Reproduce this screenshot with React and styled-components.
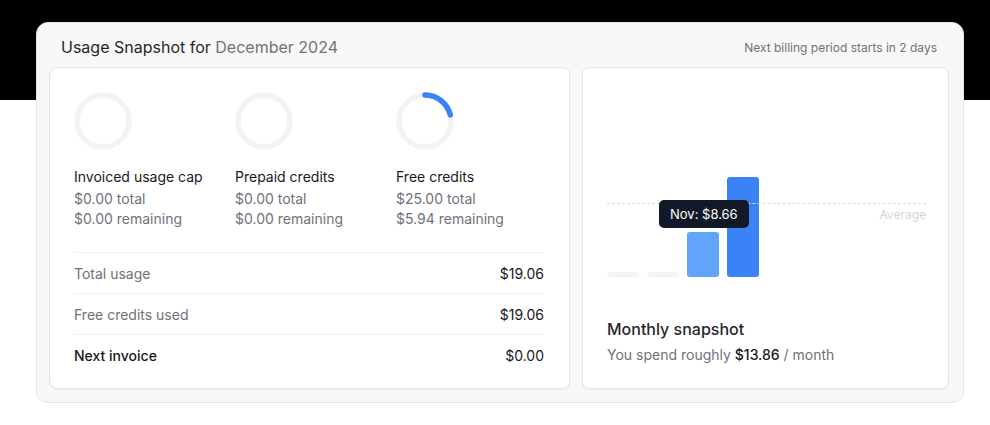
import React from "react";
import styled, { createGlobalStyle } from "styled-components";

const GlobalStyle = createGlobalStyle`
  html, body {
    margin: 0;
    padding: 0;
    background: #ffffff;
    font-family: Inter, "Noto Sans", Arial, sans-serif;
    -webkit-font-smoothing: antialiased;
  }
`;

const Page = styled.div`
  width: 990px;
  height: 425px;
  box-sizing: border-box;
  padding: 22px 26px 0 36px;
  background: linear-gradient(#000 0, #000 100px, #fff 100px, #fff 100%);
`;

const Shell = styled.div`
  box-sizing: border-box;
  width: 928px;
  background: #f8f8f8;
  border: 1px solid #e6e6e6;
  border-radius: 12px;
  padding: 0 14px 13px 12px;
`;

const Header = styled.div`
  box-sizing: border-box;
  height: 44px;
  display: flex;
  align-items: center;
  justify-content: space-between;
  padding: 4px 12px 0;
`;

const Title = styled.h2`
  margin: 0;
  font-size: 16px;
  font-weight: 400;
  color: #27272a;
`;

const Muted = styled.span`
  color: #71717a;
`;

const Hint = styled.span`
  font-size: 12px;
  color: #71717a;
`;

const Grid = styled.div`
  display: grid;
  grid-template-columns: 521px 1fr;
  gap: 12px;
`;

const Card = styled.div`
  box-sizing: border-box;
  height: 322px;
  background: #ffffff;
  border: 1px solid #e5e5e5;
  border-radius: 8px;
  box-shadow: 0 1px 2px rgba(0, 0, 0, 0.05);
  padding: ${(p) => p.$padding};
  display: flex;
  flex-direction: column;
`;

const Meters = styled.div`
  display: grid;
  grid-template-columns: repeat(3, 161px);
  padding-bottom: 23px;
`;

const Meter = styled.div`
  display: flex;
  flex-direction: column;
`;

const RingSvg = styled.svg`
  display: block;
  margin-bottom: 17px;
`;

const MeterLabel = styled.div`
  font-size: 14px;
  line-height: 20px;
  font-weight: 400;
  color: #18181b;
  margin-bottom: 2px;
`;

const MeterSub = styled.div`
  font-size: 14px;
  line-height: 20px;
  color: #71717a;
`;

const Row = styled.div`
  display: flex;
  justify-content: space-between;
  align-items: center;
  height: 41px;
  border-top: 1px solid #f0f0f0;
  font-size: 14px;
`;

const RowLabel = styled.span`
  color: ${(p) => (p.$strong ? "#18181b" : "#71717a")};
  font-weight: ${(p) => (p.$strong ? 500 : 400)};
`;

const RowValue = styled.span`
  color: #18181b;
  font-weight: 400;
`;

const Chart = styled.div`
  position: relative;
  flex: 1;
  display: flex;
  align-items: flex-end;
  gap: 8px;
  margin-bottom: 41px;
`;

const Bar = styled.div`
  width: 32px;
  border-radius: 3px;
  background: ${(p) => p.$color};
`;

const AvgLine = styled.div`
  position: absolute;
  left: 0;
  right: -2px;
  bottom: 73px;
  border-top: 1px dashed #dcdcdf;
`;

const AvgLabel = styled.span`
  position: absolute;
  right: -2px;
  bottom: 55px;
  font-size: 12px;
  line-height: 14px;
  color: #d4d4d8;
`;

const Tooltip = styled.div`
  position: absolute;
  left: 52px;
  bottom: 49px;
  height: 28px;
  padding: 0 11px;
  display: flex;
  align-items: center;
  background: #111827;
  border-radius: 5px;
  color: #ffffff;
  font-size: 13px;
  font-weight: 400;
`;

const SnapTitle = styled.div`
  font-size: 16px;
  line-height: 22px;
  font-weight: 500;
  color: #27272a;
  margin-bottom: 5px;
`;

const SnapText = styled.div`
  font-size: 14px;
  line-height: 20px;
  color: #71717a;
`;

const Strong = styled.span`
  color: #18181b;
  font-weight: 500;
`;

const Ring = ({ percent }) => {
  const r = 26;
  const c = 2 * Math.PI * r;
  return (
    <RingSvg width="58" height="58" viewBox="0 0 58 58">
      <circle cx="29" cy="29" r={r} fill="none" stroke="#f3f3f3" strokeWidth="5.5" />
      {percent > 0 && (
        <circle
          cx="29"
          cy="29"
          r={r}
          fill="none"
          stroke="#3b82f6"
          strokeWidth="5.5"
          strokeLinecap="round"
          strokeDasharray={`${(c * percent) / 100} ${c}`}
          transform="rotate(-90 29 29)"
        />
      )}
    </RingSvg>
  );
};

const meters = [
  { label: "Invoiced usage cap", total: "$0.00", remaining: "$0.00", percent: 0 },
  { label: "Prepaid credits", total: "$0.00", remaining: "$0.00", percent: 0 },
  { label: "Free credits", total: "$25.00", remaining: "$5.94", percent: 21 },
];

const rows = [
  { label: "Total usage", value: "$19.06" },
  { label: "Free credits used", value: "$19.06" },
  { label: "Next invoice", value: "$0.00", strong: true },
];

const bars = [
  { h: 5, color: "#f3f4f6" },
  { h: 5, color: "#f3f4f6" },
  { h: 45, color: "#60a5fa" },
  { h: 100, color: "#3b82f6" },
];

const App = () => (
  <Page>
    <GlobalStyle />
    <Shell>
      <Header>
        <Title>
          Usage Snapshot for <Muted>December 2024</Muted>
        </Title>
        <Hint>Next billing period starts in 2 days</Hint>
      </Header>
      <Grid>
        <Card $padding="24px 25px 13px 24px">
          <Meters>
            {meters.map((m) => (
              <Meter key={m.label}>
                <Ring percent={m.percent} />
                <MeterLabel>{m.label}</MeterLabel>
                <MeterSub>{m.total} total</MeterSub>
                <MeterSub>{m.remaining} remaining</MeterSub>
              </Meter>
            ))}
          </Meters>
          {rows.map((r) => (
            <Row key={r.label}>
              <RowLabel $strong={r.strong}>{r.label}</RowLabel>
              <RowValue>{r.value}</RowValue>
            </Row>
          ))}
        </Card>
        <Card $padding="24px 24px 23px 24px">
          <Chart>
            <AvgLine />
            <AvgLabel>Average</AvgLabel>
            {bars.map((b, i) => (
              <Bar key={i} $color={b.color} style={{ height: b.h }} />
            ))}
            <Tooltip>Nov: $8.66</Tooltip>
          </Chart>
          <SnapTitle>Monthly snapshot</SnapTitle>
          <SnapText>
            You spend roughly <Strong>$13.86</Strong> / month
          </SnapText>
        </Card>
      </Grid>
    </Shell>
  </Page>
);

export default App;
